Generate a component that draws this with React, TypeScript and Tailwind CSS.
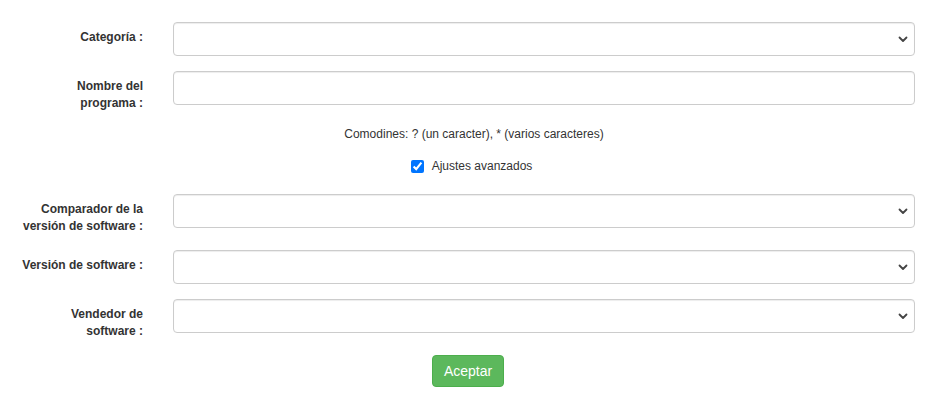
import { useState } from 'react'

const labelCls = 'w-[143px] shrink-0 pl-[20px] pt-[7px] text-right text-[12px] font-bold leading-[17px] text-[#333]'
const fieldCls =
  'block h-[34px] w-full rounded-[4px] border border-[#ccc] bg-white px-3 text-[14px] text-[#555] shadow-[inset_0_1px_1px_rgba(0,0,0,0.075)] outline-none'

function Chevron() {
  return (
    <svg
      className="pointer-events-none absolute right-[6px] top-1/2 -translate-y-1/2"
      width="12"
      height="12"
      viewBox="0 0 12 12"
      fill="none"
    >
      <path d="M2.5 4.5 6 8l3.5-3.5" stroke="#444" strokeWidth="1.8" strokeLinecap="round" strokeLinejoin="round" />
    </svg>
  )
}

function SelectField() {
  return (
    <div className="relative">
      <select className={fieldCls + ' appearance-none'} defaultValue="">
        <option value=""></option>
      </select>
      <Chevron />
    </div>
  )
}

function Row({ label, children }: { label: React.ReactNode; children: React.ReactNode }) {
  return (
    <div className="mb-[15px] flex items-start pr-[30px]">
      <div className={labelCls}>{label}</div>
      <div className="ml-[30px] flex-1">{children}</div>
    </div>
  )
}

export default function App() {
  const [advanced, setAdvanced] = useState(true)

  return (
    <div className="min-h-[404px] w-[945px] bg-white pt-[22px] font-['Liberation_Sans',Arial,sans-serif] text-[#333]">
      <Row label="Categoría :">
        <SelectField />
      </Row>

      <Row label={<>Nombre del<br />programa :</>}>
        <input type="text" className={fieldCls} />
      </Row>

      {/* Wildcards hint */}
      <p className="mt-[-1px] pl-[3px] text-center text-[12px] leading-[17px]">
        Comodines: ? (un caracter), * (varios caracteres)
      </p>

      <label className="mt-[15px] flex items-center justify-center pr-[2px] text-[12px] leading-[17px]">
        <input
          type="checkbox"
          checked={advanced}
          onChange={e => setAdvanced(e.target.checked)}
          className="m-0 mr-[8px] h-[13px] w-[13px] accent-[#0075ff]"
        />
        Ajustes avanzados
      </label>

      <div className="mt-[19px]">
        <Row label={<>Comparador de la<br />versión de software :</>}>
          <SelectField />
        </Row>
        <Row label="Versión de software :">
          <SelectField />
        </Row>
        <Row label={<>Vendedor de<br />software :</>}>
          <SelectField />
        </Row>
      </div>

      <div className="flex justify-center pr-[9px]">
        <button className="h-[32px] rounded-[4px] border border-[#4cae4c] bg-[#5cb85c] px-[11px] text-[14px] text-white">
          Aceptar
        </button>
      </div>
    </div>
  )
}
